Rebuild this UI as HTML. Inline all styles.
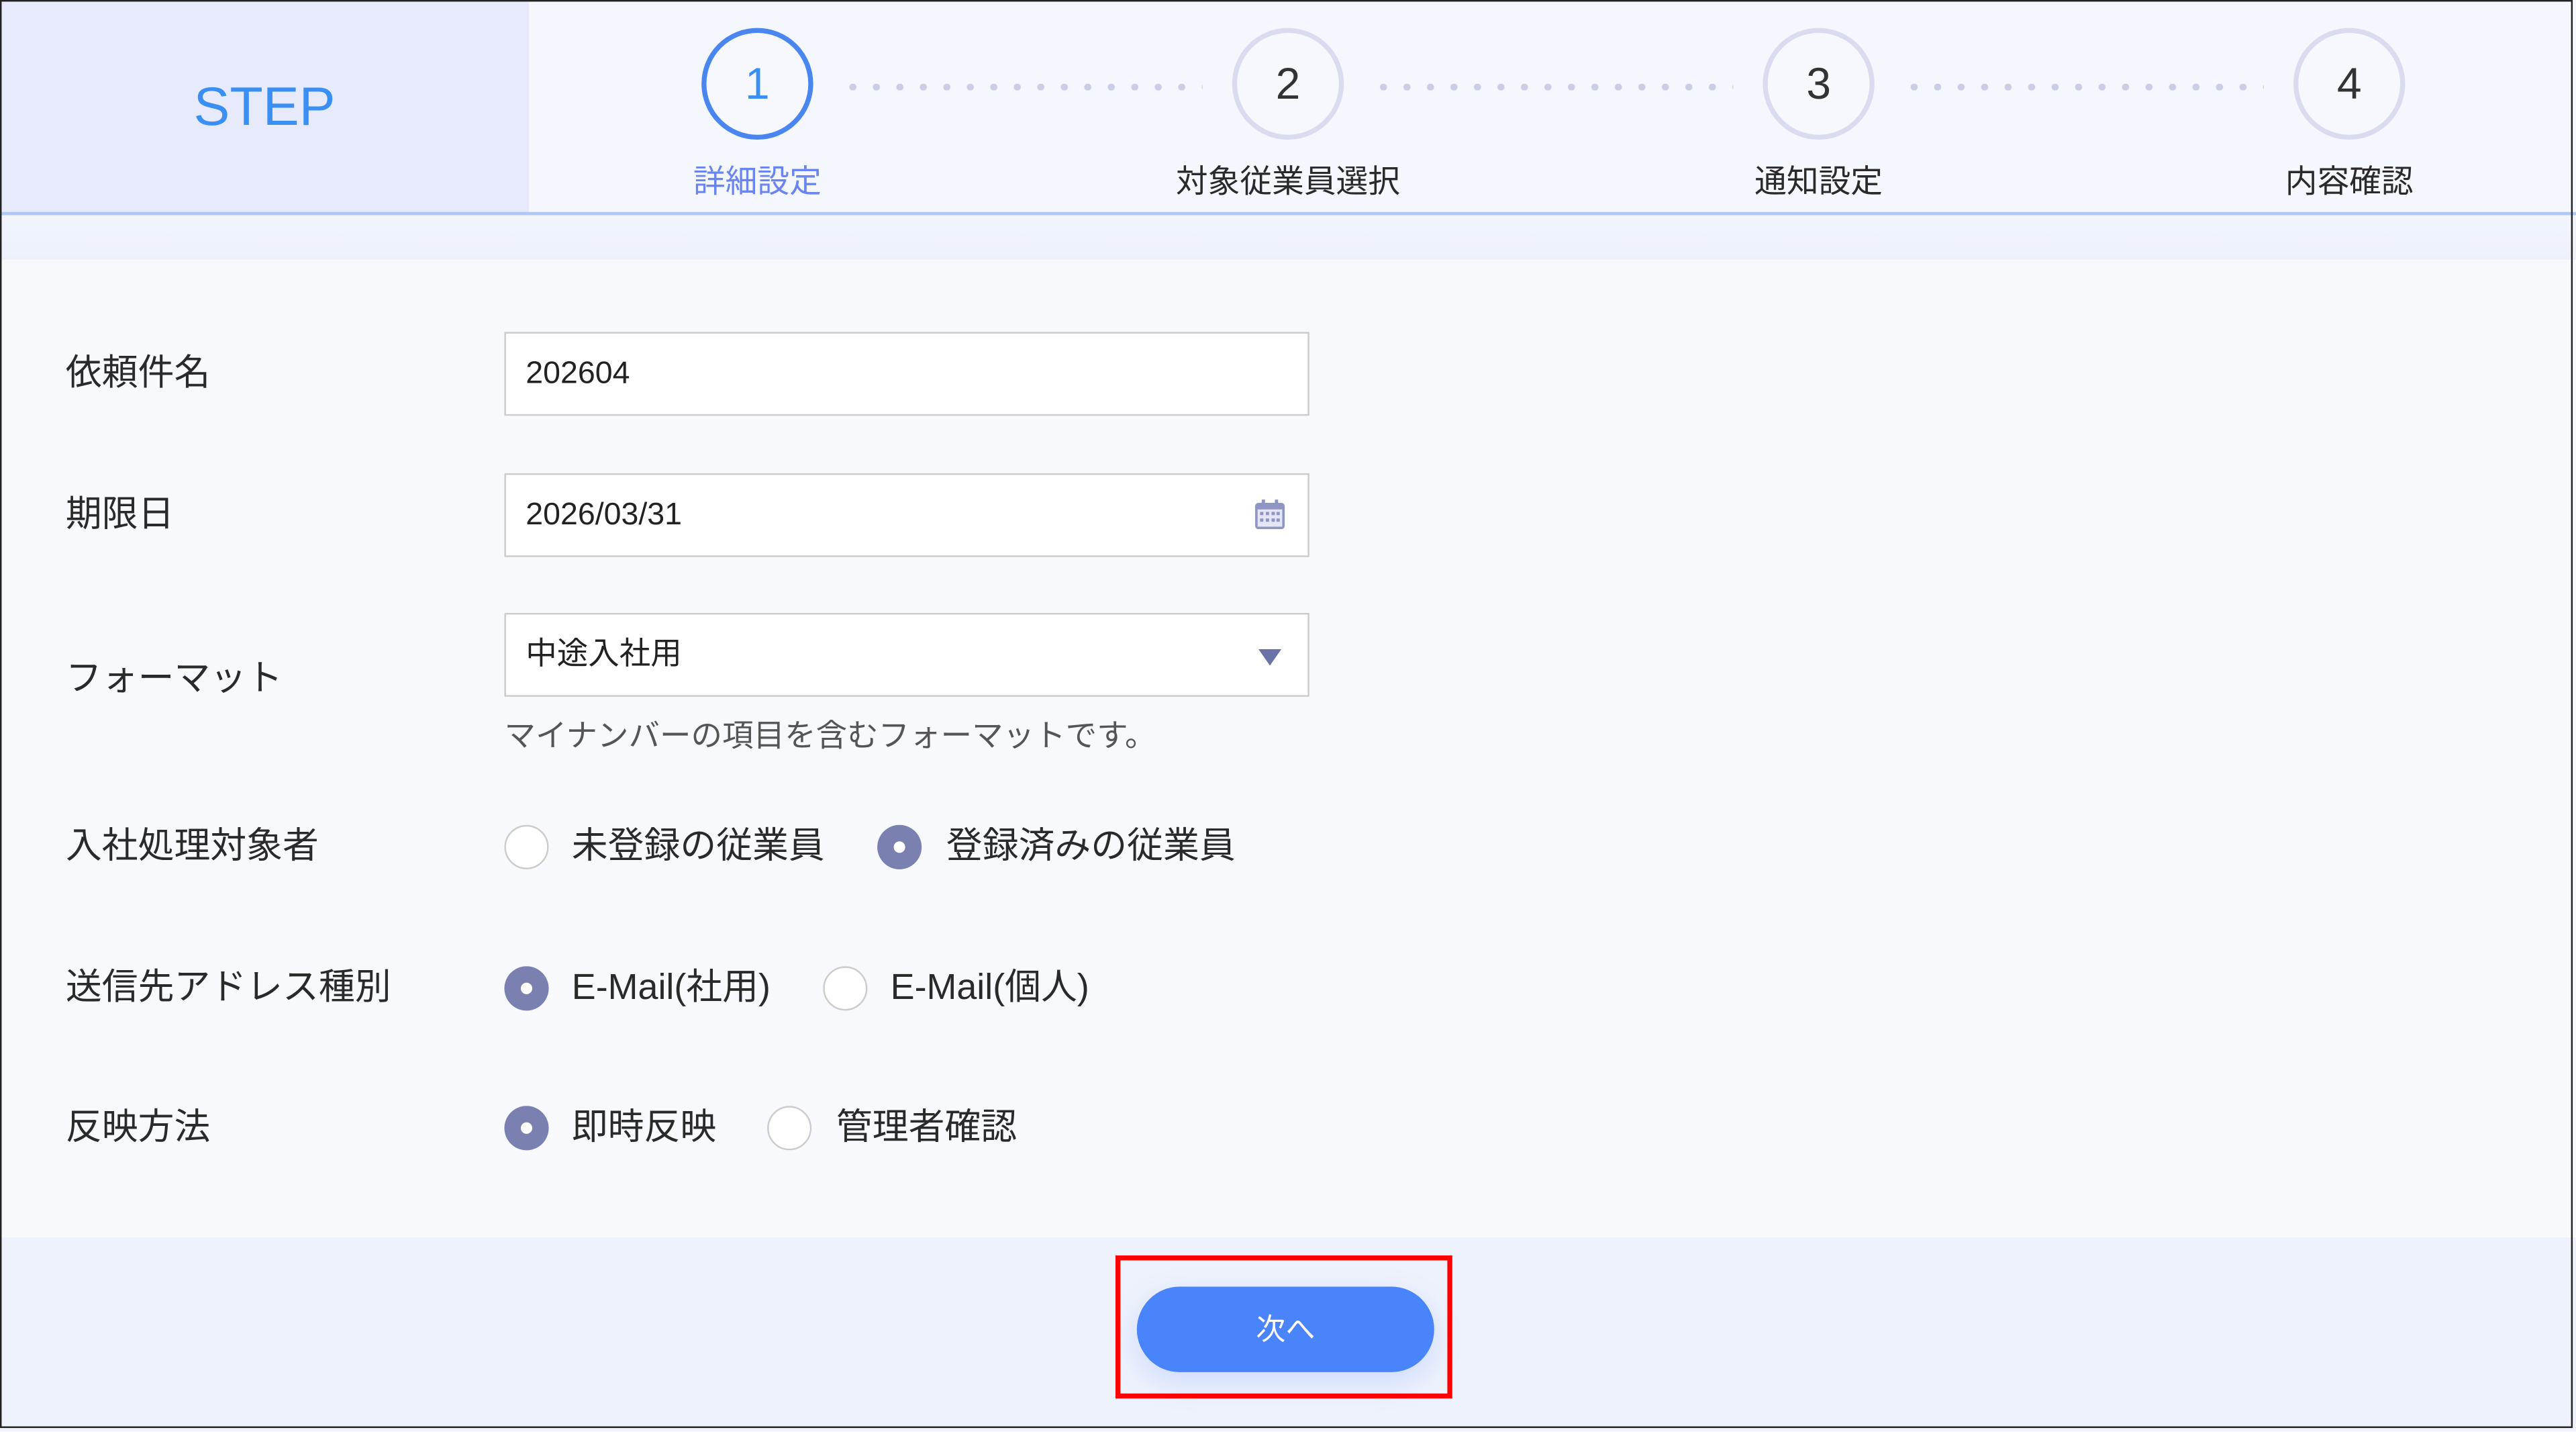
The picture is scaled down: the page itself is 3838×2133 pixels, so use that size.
<!DOCTYPE html>
<html><head><meta charset="utf-8"><style>
html,body{margin:0;padding:0;width:3838px;height:2133px;overflow:hidden;background:#fff}
#s{position:absolute;left:0;top:0;width:1568px;height:871px;transform:scale(2.4477);transform-origin:0 0;font-family:"Liberation Sans","Noto Sans CJK JP",sans-serif;color:#2a2a2a;background:#f8f9fc}
.a{position:absolute}
.frame{left:0;top:0;width:1566px;height:869px;border:1px solid #222;box-sizing:border-box;z-index:10}
.circ{width:68px;height:68px;border-radius:50%;box-sizing:border-box;border:3px solid #d9dcef;background:#f6f8fe;text-align:center;line-height:62px;font-size:27px;color:#333}
.lbl{font-size:19.5px;width:200px;text-align:center}
.dots{height:4px;background-image:radial-gradient(circle,#c9cde6 2px,transparent 2.3px);background-size:14.3px 4px}
.fl{left:40px;font-size:22px;line-height:26px}
.inp{left:307px;width:490px;height:51px;background:#fff;border:1px solid #ccc;box-sizing:border-box;font-size:19px;line-height:49px;padding-left:12px;color:#222}
.r{width:27px;height:27px;border-radius:50%;box-sizing:border-box;background:#fff;border:1px solid #ccc}
.r.on{background:#7a80b0;border:none}
.r.on:after{content:"";position:absolute;left:10px;top:10px;width:7px;height:7px;border-radius:50%;background:#fff}
.rt{font-size:22px;line-height:26px}
</style></head><body><div id="s">
<div class="a" style="left:0;top:0;width:1568px;height:130px;background:#f4f7fe"></div>
<div class="a" style="left:0;top:0;width:322px;height:130px;background:#e6eafb"></div>
<div class="a" style="left:0;top:46px;width:322px;text-align:center;font-size:33px;color:#3a8ff5">STEP</div>
<div class="a" style="left:0;top:129px;width:1568px;height:2px;background:#b1c7f5"></div>
<div class="a" style="left:0;top:131px;width:1568px;height:27px;background:linear-gradient(#f2f5fd,#edf1fa)"></div>

<div class="a dots" style="left:512px;top:51px;width:220px"></div>
<div class="a dots" style="left:835px;top:51px;width:220px"></div>
<div class="a dots" style="left:1158px;top:51px;width:220px"></div>

<div class="a circ" style="left:427px;top:17px;border-color:#4a86f0;color:#3a8ff5;font-weight:300">1</div>
<div class="a circ" style="left:750px;top:17px">2</div>
<div class="a circ" style="left:1073px;top:17px">3</div>
<div class="a circ" style="left:1396px;top:17px">4</div>
<div class="a lbl" style="left:361px;top:94px;color:#6b85f0">詳細設定</div>
<div class="a lbl" style="left:684px;top:94px">対象従業員選択</div>
<div class="a lbl" style="left:1007px;top:94px">通知設定</div>
<div class="a lbl" style="left:1330px;top:94px">内容確認</div>

<div class="a fl" style="top:214px">依頼件名</div>
<div class="a fl" style="top:300px">期限日</div>
<div class="a fl" style="top:400px">フォーマット</div>
<div class="a fl" style="top:502px">入社処理対象者</div>
<div class="a fl" style="top:588px">送信先アドレス種別</div>
<div class="a fl" style="top:673px">反映方法</div>

<div class="a inp" style="top:202px">202604</div>
<div class="a inp" style="top:288px">2026/03/31
<svg class="a" style="left:455px;top:14px" width="20" height="20" viewBox="0 0 20 20"><rect x="1" y="3" width="18" height="16" rx="2" fill="#8f96c4"/><rect x="2.5" y="7" width="15" height="10.5" fill="#e4e6f3"/><g fill="#8f96c4"><rect x="4" y="8.5" width="2" height="2"/><rect x="7.5" y="8.5" width="2" height="2"/><rect x="11" y="8.5" width="2" height="2"/><rect x="14" y="8.5" width="2" height="2"/><rect x="4" y="12.5" width="2" height="2"/><rect x="7.5" y="12.5" width="2" height="2"/><rect x="11" y="12.5" width="2" height="2"/><rect x="14" y="12.5" width="2" height="2"/><rect x="5" y="1" width="2" height="4"/><rect x="13" y="1" width="2" height="4"/></g></svg></div>
<div class="a inp" style="top:373px">中途入社用
<svg class="a" style="left:458px;top:21px" width="14" height="10" viewBox="0 0 14 10"><path d="M0 0H14L7 10Z" fill="#6b72a8"/></svg></div>
<div class="a" style="left:307px;top:433px;font-size:19px;color:#555">マイナンバーの項目を含むフォーマットです。</div>

<div class="a r" style="left:307px;top:502px"></div>
<div class="a rt" style="left:348px;top:502px">未登録の従業員</div>
<div class="a r on" style="left:534px;top:502px"></div>
<div class="a rt" style="left:576px;top:502px">登録済みの従業員</div>

<div class="a r on" style="left:307px;top:588px"></div>
<div class="a rt" style="left:348px;top:588px">E-Mail(社用)</div>
<div class="a r" style="left:501px;top:588px"></div>
<div class="a rt" style="left:542px;top:588px">E-Mail(個人)</div>

<div class="a r on" style="left:307px;top:673px"></div>
<div class="a rt" style="left:348px;top:673px">即時反映</div>
<div class="a r" style="left:467px;top:673px"></div>
<div class="a rt" style="left:509px;top:673px">管理者確認</div>

<div class="a" style="left:0;top:753px;width:1568px;height:118px;background:#eef2fc"></div>
<div class="a" style="left:692px;top:783px;width:181px;height:52px;border-radius:26px;background:#4a84fb;color:#fff;text-align:center;line-height:52px;font-size:18px;box-shadow:0 6px 18px rgba(74,132,251,.2)">次へ</div>
<div class="a" style="left:679px;top:764px;width:205px;height:87px;border:3px solid #f00;box-sizing:border-box"></div>
<div class="a frame"></div>
</div></body></html>
